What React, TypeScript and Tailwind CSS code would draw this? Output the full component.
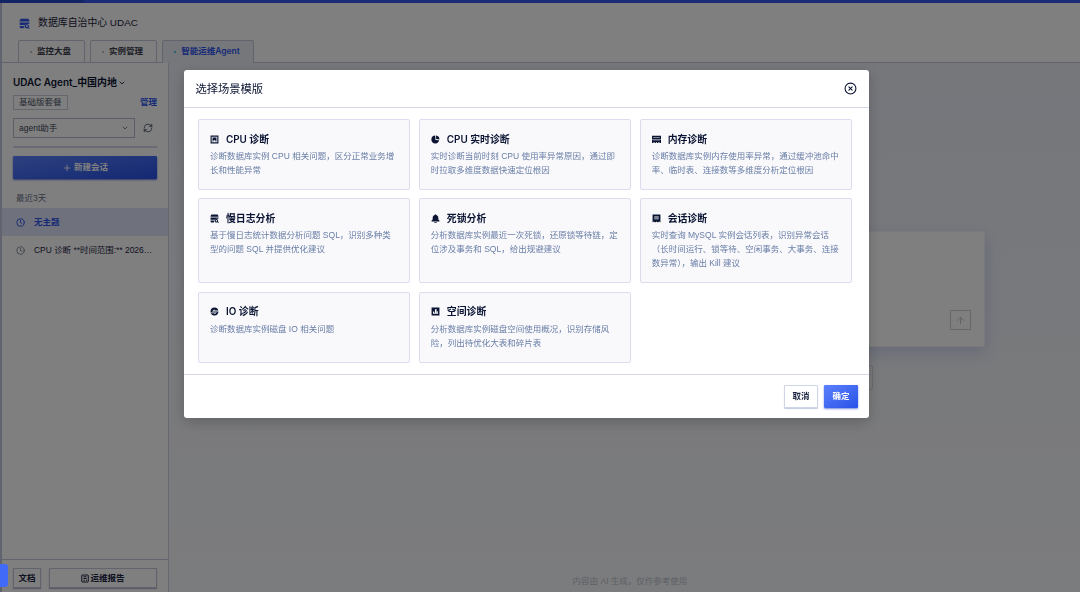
import React, { useState } from 'react';
import { ArrowUp, ChevronDown, CircleX, Clock, Plus, RefreshCw } from 'lucide-react';
import clsx from 'clsx';

const CpuIcon = () => (
  <>
    <path fillRule="evenodd" d="M1 1h14v14H1zM3 3v10h10V3z" />
    <path d="M4.5 4.5h7v7h-1.8v-2H6.3v2H4.5z" />
  </>
);

const PieIcon = () => (
  <>
    <path d="M7.5 1a7 7 0 1 0 7 8.5L8 9z" />
    <path d="M9 0.8A7 7 0 0 1 15 7.8L9 7z" />
  </>
);

const MemoryIcon = () => (
  <path
    fillRule="evenodd"
    d="M0 1.5h16V7H0zM2 3.7v.8h12v-.8zM0 8h16v6h-2.5v-1H11v1H9v-1H7v1H5v-1H2.5v1H0zM2 10v.8h12V10z"
  />
);

const SlowLogIcon = () => (
  <>
    <path d="M2.5 1h11L15 3.5V5H1V3.5z" />
    <path d="M1 6.4h14v2.2h-3.5L8 10.2H1z" />
    <path d="M1 11.5h6V15H2.5L1 13.6z" />
    <path fillRule="evenodd" d="M11.5 9a3.1 3.1 0 0 1 2.7 4.6l1.6 1.5-1 .9-1.7-1.5A3.1 3.1 0 1 1 11.5 9zM11.5 10.7a1.4 1.4 0 1 0 0 2.8 1.4 1.4 0 0 0 0-2.8z" />
  </>
);

const BellIcon = () => (
  <path d="M8 .5c.8 0 1.3.5 1.3 1.3 2.4.6 3.7 2.5 3.7 5v2.9l2 2v1.600H1v-1.600l2-2V6.800c0-2.500 1.300-4.400 3.700-5C6.700 1 7.200.5 8 .5zM5.800 14h4.400v1.500H5.800z" />
);

const SessionIcon = () => (
  <path fillRule="evenodd" d="M1 1h14v14l-2.3-1.6L10.4 15 8 13.4 5.6 15l-2.3-1.6L1 15zM4 4.5v1.6h8V4.5zM4 8v1.5h8V8z" />
);

const IoIcon = () => (
  <path fillRule="evenodd" d="M8 1a7 7 0 0 1 6.8 5.3H8V4.2L3.5 7.8H15a7 7 0 0 1-.2 1.9H1.1l.4 1.2H8V13l4.5-3.3h2.2A7 7 0 1 1 8 1z" />
);

const SpaceIcon = () => (
  <path fillRule="evenodd" d="M1 1h14v14H1zM3.5 8v4h9V7.500H11V10h-1V4H7v6H5.500V8z" />
);

interface Scene {
  title: string;
  desc: string;
  Icon: React.FC;
}

const scenes: Scene[] = [
  { title: 'CPU 诊断', desc: '诊断数据库实例 CPU 相关问题，区分正常业务增长和性能异常', Icon: CpuIcon },
  { title: 'CPU 实时诊断', desc: '实时诊断当前时刻 CPU 使用率异常原因，通过即时拉取多维度数据快速定位根因', Icon: PieIcon },
  { title: '内存诊断', desc: '诊断数据库实例内存使用率异常，通过缓冲池命中率、临时表、连接数等多维度分析定位根因', Icon: MemoryIcon },
  { title: '慢日志分析', desc: '基于慢日志统计数据分析问题 SQL，识别多种类型的问题 SQL 并提供优化建议', Icon: SlowLogIcon },
  { title: '死锁分析', desc: '分析数据库实例最近一次死锁，还原锁等待链，定位涉及事务和 SQL，给出规避建议', Icon: BellIcon },
  { title: '会话诊断', desc: '实时查询 MySQL 实例会话列表，识别异常会话（长时间运行、锁等待、空闲事务、大事务、连接数异常），输出 Kill 建议', Icon: SessionIcon },
  { title: 'IO 诊断', desc: '诊断数据库实例磁盘 IO 相关问题', Icon: IoIcon },
  { title: '空间诊断', desc: '分析数据库实例磁盘空间使用概况，识别存储风险，列出待优化大表和碎片表', Icon: SpaceIcon },
];

const tabs = ['监控大盘', '实例管理', '智能运维Agent'];

const SceneCard: React.FC<{ scene: Scene }> = ({ scene: { title, desc, Icon } }) => (
  <div className="rounded-[2px] border border-[#dcdcee] bg-[#f9f9fc] pt-[12px] pr-[12px] pl-[11px]">
    <div className="flex h-[14px] items-center font-['Inter','Noto_Sans_CJK_SC',sans-serif] text-[9.87px] font-semibold text-[#0b1533]">
      <svg viewBox="0 0 16 16" className="mr-[7px] h-[9px] w-[9px] shrink-0" fill="currentColor">
        <Icon />
      </svg>
      {title}
    </div>
    <p className="mt-[3px] text-[8.5px] leading-[14px] text-[#687da5]">{desc}</p>
  </div>
);

const Header = () => (
  <header className="flex h-[60px] shrink-0 flex-col justify-between border-b border-[#c4c7da] bg-white">
    <div className="flex h-[37px] items-center pt-[3px] pl-[17px] text-[9.9px] text-[#1a2240]">
      <svg viewBox="0 0 16 16" className="mr-[8px] h-[11px] w-[11px]" fill="#2f55eb">
        <SlowLogIcon />
      </svg>
      数据库自治中心 UDAC
    </div>
    <div className="-mb-px flex gap-[5px] pl-[16px] text-[8.5px] font-semibold">
      {tabs.map((tab, i) => (
        <div
          key={tab}
          className={clsx(
            'flex h-[23px] items-center justify-center rounded-t-[2px] border pr-[2px]',
            i === 2
              ? "w-[92px] border-[#c4c7da] border-b-[#eceef7] bg-[#eceef7] font-['Inter','Noto_Sans_CJK_SC',sans-serif] text-[#2f55eb]"
              : 'w-[67px] border-[#c4c7da] bg-white text-[#3c3f4c]'
          )}
        >
          <span className={clsx('mr-[5px] h-[2px] w-[2px] rounded-full', i === 2 ? 'bg-[#20b8e8]' : 'bg-[#a8abb8]')} />
          {tab}
        </div>
      ))}
    </div>
  </header>
);

const Sidebar = () => (
  <aside className="flex w-[167px] shrink-0 flex-col border-r border-[#cdcfde] bg-white">
    <div className="flex flex-col px-[11px] pt-[12px]">
      <div className="flex h-[15px] items-center font-['Inter','Noto_Sans_CJK_SC',sans-serif] text-[9.95px] font-semibold whitespace-nowrap text-[#0b1533]">
        UDAC Agent_中国内地
        <ChevronDown size={8} strokeWidth={2.5} className="ml-px" />
      </div>
      <div className="mt-[5px] flex h-[15px] items-center justify-between text-[8.5px]">
        <span className="flex h-[15px] items-center border border-[#c8cbda] px-[5px] text-[#4a5268]">基础版套餐</span>
        <span className="font-semibold text-[#2f55eb]">管理</span>
      </div>
      <div className="mt-[8px] flex items-center">
        <div className="flex h-[20px] w-[122px] items-center justify-between border border-[#b9bdcc] px-[5px] text-[8.5px] text-[#3c4358]">
          agent助手
          <ChevronDown size={8} />
        </div>
        <RefreshCw size={10} className="ml-[8px] text-[#3c4358]" />
      </div>
      <div className="mt-[8px] h-[2px] bg-[#d5d7e8]" />
      <button className="mt-[8px] flex h-[23px] items-center justify-center rounded-[1px] bg-linear-to-br from-[#5c80fb] to-[#2850e8] text-[8.5px] font-semibold text-white shadow-[0_1px_2px_rgba(30,60,200,0.7)]">
        <Plus size={10} className="mr-[2px]" />
        新建会话
      </button>
    </div>
    <div className="mt-[12px] flex h-[14px] items-center pl-[14px] text-[8.5px] text-[#657189]">最近3天</div>
    <div className="mt-[3px] flex h-[28px] items-center bg-[#dee2fb] pl-[14px] text-[8.5px] font-semibold text-[#2f55eb]">
      <Clock size={9} strokeWidth={2.5} className="mr-[9px]" />
      无主题
    </div>
    <div className="flex h-[28px] items-center pl-[14px] text-[8.45px] text-[#1a2240]">
      <Clock size={9} className="mr-[9px] shrink-0 text-[#6c7488]" />
      <span className="whitespace-nowrap">CPU 诊断 **时间范围:** 2026…</span>
    </div>
    <div className="mt-auto flex h-[33px] gap-[8px] border-t border-[#c4c7da] px-[11px] pt-[8px] text-[8.5px] font-semibold text-[#1a2240]">
      <button className="flex h-[20px] w-[28px] items-center justify-center border border-[#c4c7da] shadow-[0_1px_1px_#b4b8d0]">文档</button>
      <button className="flex h-[20px] flex-1 items-center justify-center border border-[#c4c7da] shadow-[0_1px_1px_#b4b8d0]">
        <svg viewBox="0 0 16 16" className="mr-px h-[9px] w-[8px]" fill="none" stroke="currentColor" strokeWidth="2">
          <rect x="1.5" y="1" width="13" height="14" rx="1" />
          <path d="M5 4.5h6M5 8h6M5 11.5h3M10 11.5h2" />
        </svg>
        运维报告
      </button>
    </div>
  </aside>
);

const Workspace = () => (
  <main className="flex min-w-0 flex-1 flex-col items-center bg-linear-to-b from-[#eceef7] to-[#f7f8fa] pt-[168px]">
    <div className="flex h-[116px] w-[720px] items-end justify-end rounded-[3px] border border-[#f5f5fc] bg-white p-[13px] pb-[16px] shadow-[0_5px_16px_rgba(70,90,210,0.22)]">
      <div className="flex h-[20px] w-[21px] items-center justify-center border border-[#cfcfd4] text-[#c2c2c8]">
        <ArrowUp size={11} />
      </div>
    </div>
    <div className="mt-[18px] h-[25px] w-[497px] rounded-[2px] border border-[#d6d7e0]" />
    <p className="mt-auto flex h-[22px] items-center pl-[11px] text-[8.5px] text-[#bcc0cc]">内容由 AI 生成，仅作参考使用</p>
  </main>
);

const SceneDialog: React.FC<{ onClose: () => void }> = ({ onClose }) => (
  <div className="fixed inset-0 bg-black/50">
    <div className="mt-[70px] ml-[184px] flex h-[348px] w-[685px] flex-col rounded-[3px] bg-white shadow-[0_4px_14px_rgba(0,0,0,0.2)]">
      <div className="flex h-[38px] items-center justify-between border-b border-[#d6d8e8] pr-[12px] pl-[11.5px] text-[#0b1533]">
        <h2 className="pt-px text-[11.27px]">选择场景模版</h2>
        <button onClick={onClose}>
          <CircleX size={13} />
        </button>
      </div>
      <div className="grid flex-1 grid-cols-3 grid-rows-[71px_85px_71px] gap-x-[8.5px] gap-y-[8.3px] pt-[11px] pr-[17px] pl-[14px]">
        {scenes.map(scene => (
          <SceneCard key={scene.title} scene={scene} />
        ))}
      </div>
      <div className="flex h-[44px] justify-end gap-[6px] border-t border-[#d6d8e8] pt-[10px] pr-[11px] text-[8.5px] font-semibold">
        <button onClick={onClose} className="h-[23px] w-[34px] rounded-[1px] border border-[#cfd4e6] bg-white text-[#1a2240] shadow-[0_1px_1px_#c5cbe0]">
          取消
        </button>
        <button onClick={onClose} className="h-[23px] w-[34px] rounded-[1px] bg-linear-to-br from-[#5c80fb] to-[#2850e8] text-white shadow-[0_1px_2px_rgba(30,60,200,0.6)]">
          确定
        </button>
      </div>
    </div>
  </div>
);

const App: React.FC = () => {
  const [open, setOpen] = useState(true);

  return (
    <div className="flex h-[592px] w-[1080px] flex-col overflow-hidden font-['Liberation_Sans','Noto_Sans_CJK_SC',sans-serif]">
      <div className="h-[3px] shrink-0 bg-linear-to-r from-[#2448c8] from-[83px] to-[#3459ea] to-[84px]" />
      <div className="flex min-h-0 flex-1">
        <div className="w-[2px] shrink-0 bg-[#c3c6df]" />
        <div className="flex min-w-0 flex-1 flex-col">
          <Header />
          <div className="flex min-h-0 flex-1">
            <Sidebar />
            <Workspace />
          </div>
        </div>
      </div>
      {open && <SceneDialog onClose={() => setOpen(false)} />}
      {/* Edge handle stays above the mask */}
      <div className="fixed top-[564px] left-0 h-[23px] w-[8px] rounded-r-[3px] bg-[#426af8]" />
    </div>
  );
};

export default App;
